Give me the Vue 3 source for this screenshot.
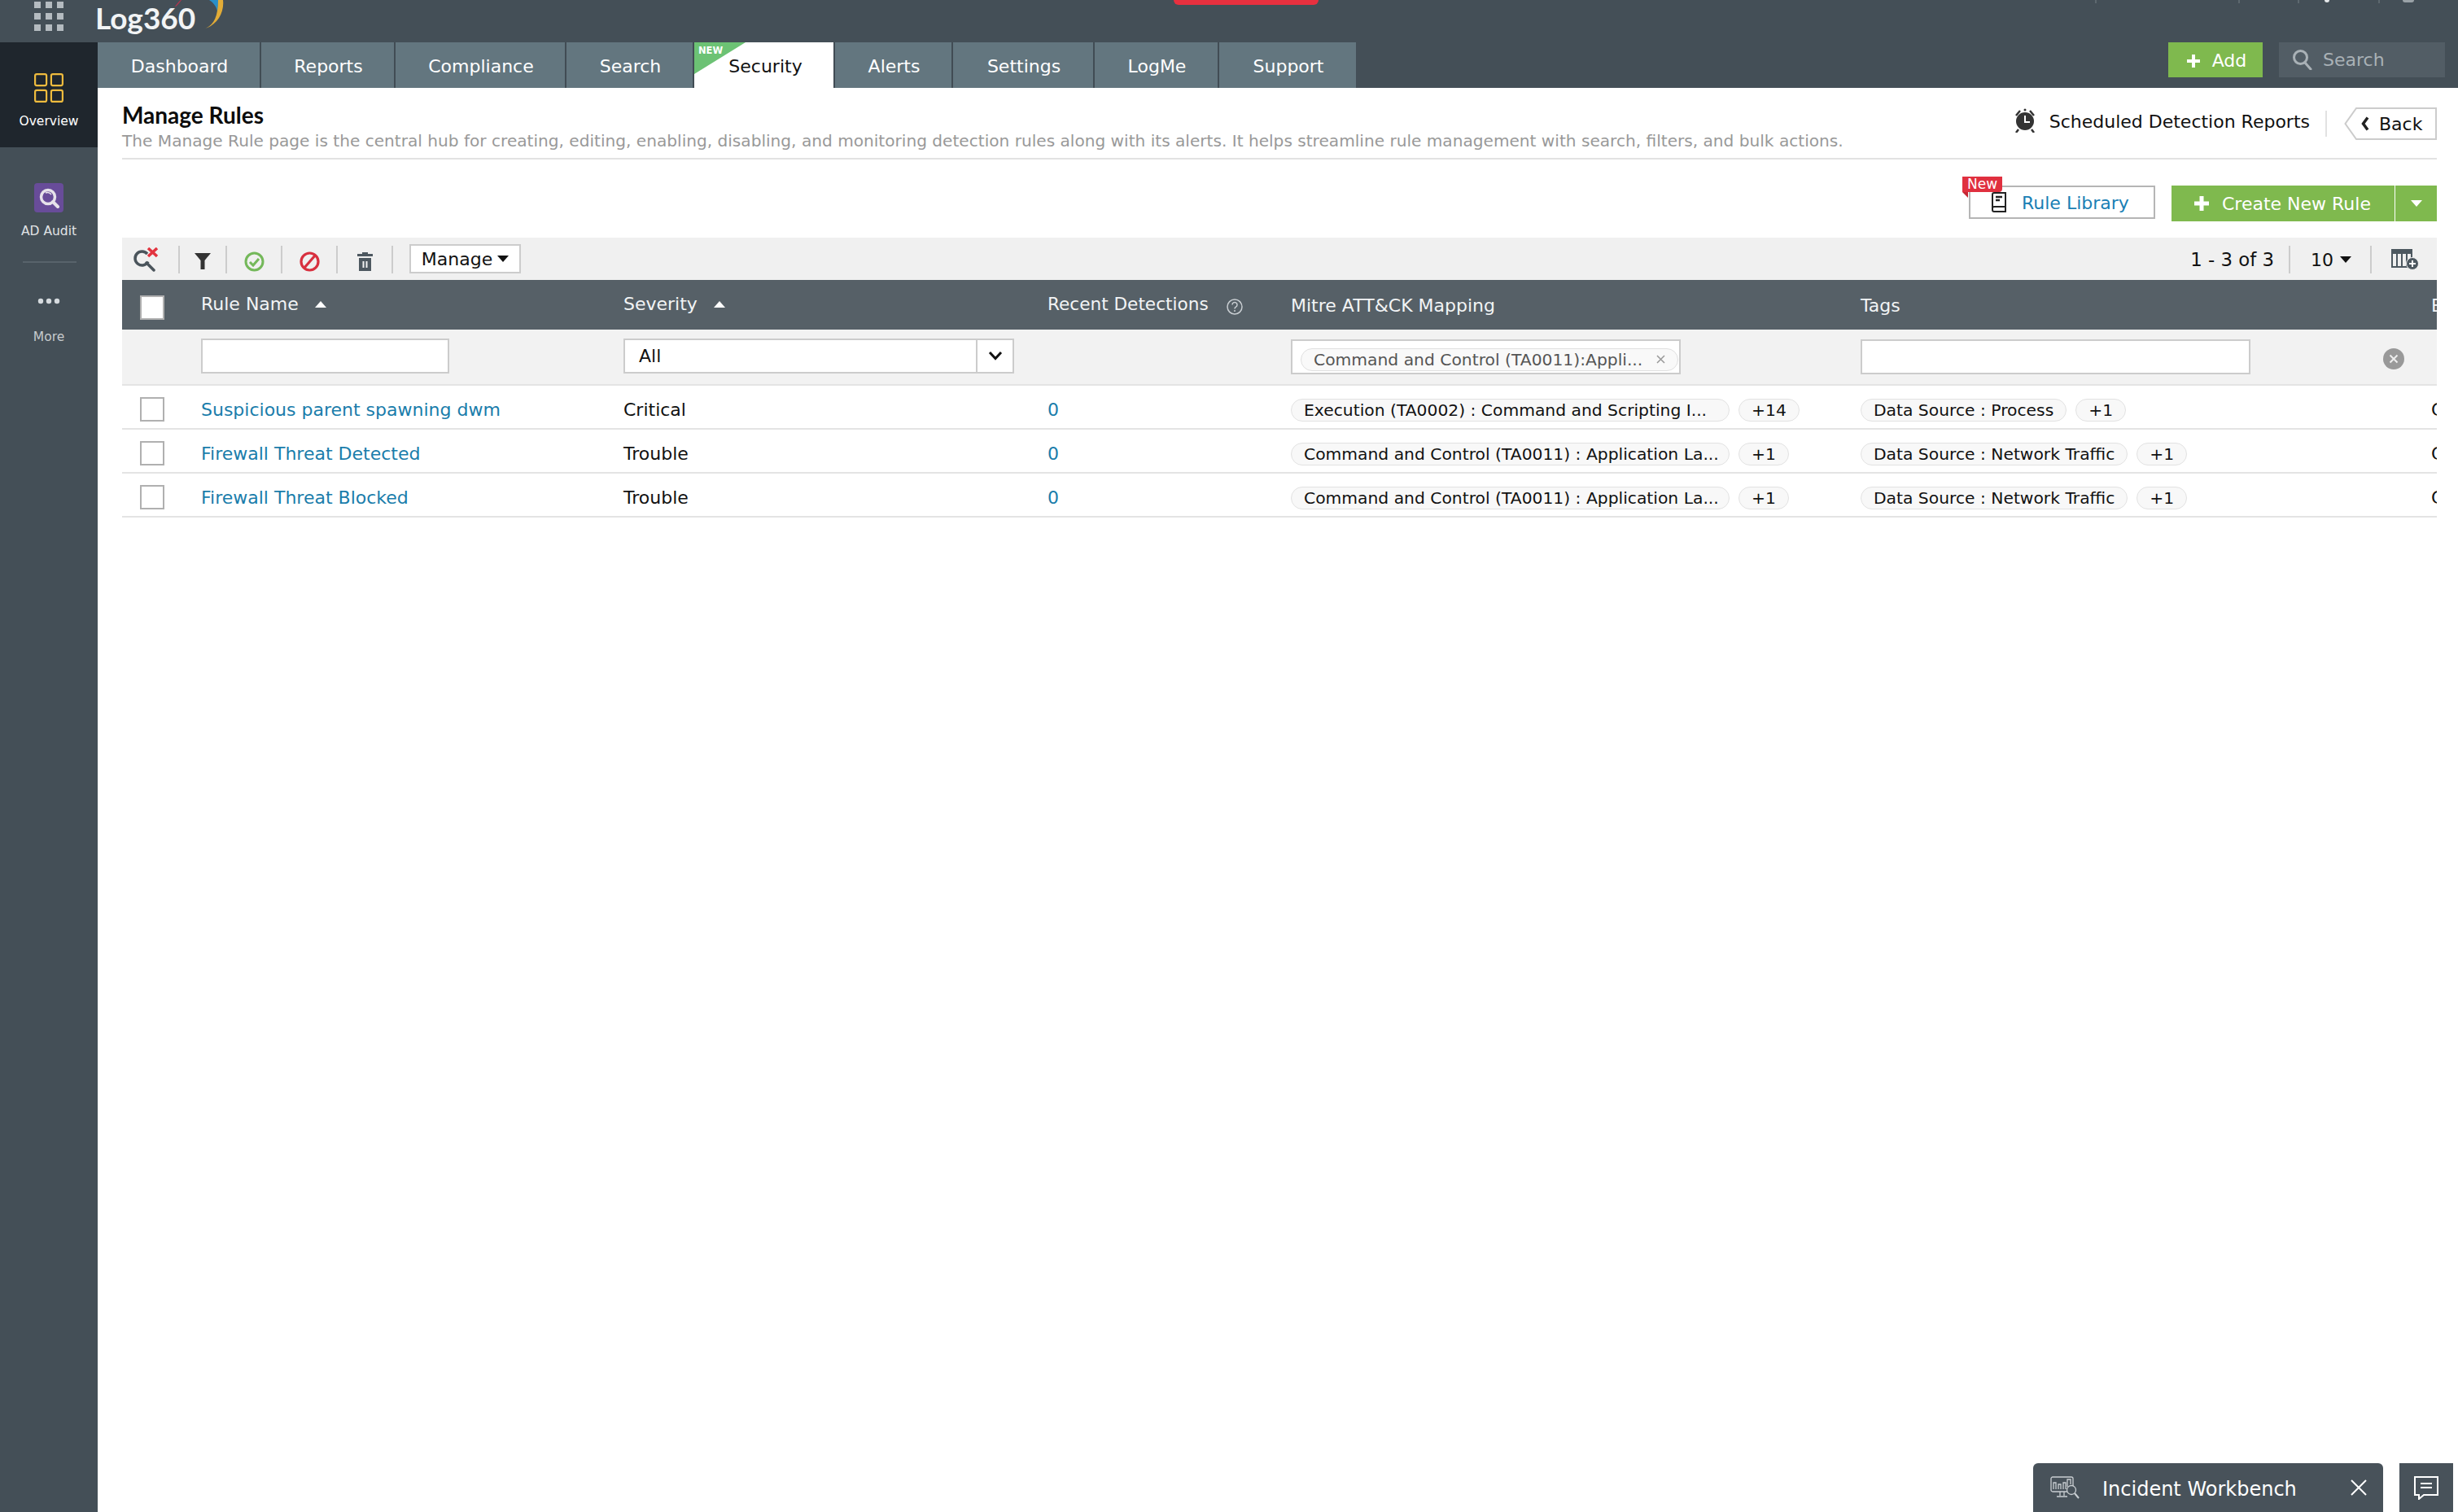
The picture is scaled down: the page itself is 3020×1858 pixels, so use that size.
<script setup>
const tabs = [
  { name: 'Dashboard', w: 201 },
  { name: 'Reports', w: 165 },
  { name: 'Compliance', w: 210 },
  { name: 'Search', w: 157 },
  { name: 'Security', w: 173, active: true },
  { name: 'Alerts', w: 145 },
  { name: 'Settings', w: 174 },
  { name: 'LogMe', w: 153 },
  { name: 'Support', w: 168, last: true },
]
const rows = [
  { name: 'Suspicious parent spawning dwm', sev: 'Critical', mitre: 'Execution (TA0002) : Command and Scripting I...', more: '+14', tag: 'Data Source : Process' },
  { name: 'Firewall Threat Detected', sev: 'Trouble', mitre: 'Command and Control (TA0011) : Application La...', more: '+1', tag: 'Data Source : Network Traffic' },
  { name: 'Firewall Threat Blocked', sev: 'Trouble', mitre: 'Command and Control (TA0011) : Application La...', more: '+1', tag: 'Data Source : Network Traffic' },
]
</script>

<template>
  <div class="app">
    <header class="top">
      <div class="apps">
        <i v-for="n in 9" :key="n"></i>
      </div>
      <div class="logo">
        <span class="logo-text">Log360</span>
        <svg class="swoosh" width="66" height="38" viewBox="0 0 66 38">
          <path d="M3 8 C5 5 7 3 10 0 L11 0 C9 3 7 5 4 8Z" fill="#b8344f" />
          <path d="M45 0 L56 0 C56 5 56 9 55 14 C54 8 50 3 45 0Z" fill="#2a8fc7" />
          <path d="M36 36 C48 34 56 24 56 0 L62 0 C64 16 54 33 36 36Z" fill="#e2ac37" />
        </svg>
      </div>
      <div class="alert-tab"></div>
      <div class="tips">
        <i class="tip t1"></i><i class="tip t2"></i><b class="dot d1"></b><i class="tip t3"></i><i class="tip t4"></i><b class="dot d2"></b>
      </div>
    </header>

    <div class="shell">
      <aside class="side">
        <div class="side-item active">
          <svg width="36" height="36" viewBox="0 0 36 36" fill="none" stroke="#eebb3e" stroke-width="2.2">
            <rect x="1.1" y="1.1" width="14" height="14" rx="2" />
            <rect x="20.9" y="1.1" width="14" height="14" rx="2" />
            <rect x="1.1" y="20.9" width="14" height="14" rx="2" />
            <rect x="20.9" y="20.9" width="14" height="14" rx="2" />
          </svg>
          <span>Overview</span>
        </div>
        <div class="side-item audit">
          <svg width="36" height="36" viewBox="0 0 36 36">
            <rect width="36" height="36" rx="4" fill="#684c99" />
            <circle cx="17" cy="17" r="8.5" fill="#684c99" stroke="#e6e2ea" stroke-width="3.5" />
            <path d="M23 23 L29 29" stroke="#e6e2ea" stroke-width="4" stroke-linecap="round" />
            <path d="M14 12 A6 6 0 0 1 21 14" fill="none" stroke="#e6e2ea" stroke-width="1.5" />
          </svg>
          <span>AD Audit</span>
        </div>
        <div class="side-rule"></div>
        <div class="side-item more">
          <svg width="28" height="8" viewBox="0 0 28 8" fill="#d5dade">
            <circle cx="4" cy="4" r="3.2" /><circle cx="14" cy="4" r="3.2" /><circle cx="24" cy="4" r="3.2" />
          </svg>
          <span>More</span>
        </div>
      </aside>

      <div class="content">
        <nav class="tabs">
          <div
            v-for="t in tabs"
            :key="t.name"
            class="tab"
            :class="{ active: t.active, last: t.last }"
            :style="{ width: t.w + 'px' }"
          >
            <template v-if="t.active">
              <svg class="ribbon" width="63" height="39" viewBox="0 0 63 39"><path d="M0 0H63L0 39Z" fill="#6cc274" /></svg>
              <span class="ribbon-text">NEW</span>
            </template>
            {{ t.name }}
          </div>
          <div class="tab-actions">
            <button class="add-btn">
              <svg width="16" height="16" viewBox="0 0 16 16" fill="#fff"><path d="M6 0h4v6h6v4h-6v6H6v-6H0V6h6z" /></svg>
              <span>Add</span>
            </button>
            <div class="global-search">
              <svg width="26" height="26" viewBox="0 0 26 26" fill="none" stroke="#a9b1b6" stroke-width="3">
                <circle cx="10.5" cy="10.5" r="8" /><path d="M16 17 L23 25" stroke-linecap="round" />
              </svg>
              Search
            </div>
          </div>
        </nav>

        <main class="page">
          <section class="head">
            <div class="head-left">
              <h1>Manage Rules</h1>
              <p>The Manage Rule page is the central hub for creating, editing, enabling, disabling, and monitoring detection rules along with its alerts. It helps streamline rule management with search, filters, and bulk actions.</p>
            </div>
            <div class="head-right">
              <svg width="28" height="30" viewBox="0 0 28 30">
                <circle cx="14" cy="16" r="11" fill="#333" />
                <path d="M14 9v8h6" fill="none" stroke="#fff" stroke-width="2" />
                <path d="M3 9 L8 3 M25 9 L20 3 M6 26 L3 30 M22 26 L25 30" stroke="#333" stroke-width="2.5" />
                <circle cx="14" cy="2" r="1.5" fill="#333" />
              </svg>
              <span class="sched">Scheduled Detection Reports</span>
              <span class="head-sep"></span>
              <div class="back">
                <svg class="back-shape" width="114" height="40" viewBox="0 0 114 40">
                  <path d="M15 1H113V39H15L1.500 20Z" fill="#fff" stroke="#ccc" stroke-width="2" />
                </svg>
                <svg class="back-arrow" width="10" height="18" viewBox="0 0 10 18"><path d="M8 1.500 L2.500 9 L8 16.500" fill="none" stroke="#222" stroke-width="3.500" /></svg>
                <span class="back-text">Back</span>
              </div>
            </div>
          </section>

          <section class="actions">
            <div class="lib">
              <span class="new-flag">New</span>
              <svg width="20" height="25" viewBox="0 0 20 25" fill="none" stroke="#222" stroke-width="2">
                <path d="M2 20V3a2 2 0 0 1 2-2h14v23H4a2 2 0 0 1-2-2v-2a2 2 0 0 1 2-2h14" />
                <path d="M6 6h8M6 10h5" stroke-width="2.500" />
              </svg>
              <span class="lib-text">Rule Library</span>
            </div>
            <div class="create">
              <span class="create-main">
                <svg width="18" height="18" viewBox="0 0 18 18" fill="#fff"><path d="M6.500 0h5v6.500H18v5h-6.500V18h-5v-6.500H0v-5h6.500z" /></svg>
                Create New Rule
              </span>
              <span class="create-drop"><i class="caret white"></i></span>
            </div>
          </section>

          <section class="toolbar">
            <div class="tool first">
              <svg width="32" height="30" viewBox="0 0 32 30" fill="none">
                <path d="M18 8 A8.500 8.500 0 1 0 19 17.500" stroke="#4a545b" stroke-width="3.500" />
                <path d="M17 19 L26 28" stroke="#4a545b" stroke-width="3.500" stroke-linecap="round" />
                <path d="M19 1 L30 11 M30 1 L19 11" stroke="#e2343f" stroke-width="3.500" />
              </svg>
            </div>
            <div class="tool w58">
              <svg class="down" width="20" height="20" viewBox="0 0 20 20" fill="#333"><path d="M0 0H20L12.500 9V20H7.500V9Z" /></svg>
            </div>
            <div class="tool">
              <svg class="down" width="25" height="25" viewBox="0 0 25 25" fill="none">
                <circle cx="12.500" cy="12.500" r="10.500" stroke="#74b85a" stroke-width="3" />
                <path d="M7 13 L11 17 L18 9" stroke="#74b85a" stroke-width="3" />
              </svg>
            </div>
            <div class="tool">
              <svg class="down" width="25" height="25" viewBox="0 0 25 25" fill="none">
                <circle cx="12.500" cy="12.500" r="10.500" stroke="#d8303f" stroke-width="3.200" />
                <path d="M19 5 L6 20" stroke="#d8303f" stroke-width="3.200" />
              </svg>
            </div>
            <div class="tool">
              <svg class="down" width="19" height="23" viewBox="0 0 19 23">
                <path d="M6 0h7v2h6v3H0V2h6z M2 7h15v16H2z" fill="#4d5860" />
                <path d="M7.500 11v8M11.500 11v8" stroke="#f0f0f0" stroke-width="2" />
              </svg>
            </div>
            <div class="manage">Manage <i class="caret"></i></div>
            <div class="pager">
              <span class="pg-count">1 - 3 of 3</span>
              <span class="pg-size">10 <i class="caret"></i></span>
              <span class="pg-cols">
                <svg width="34" height="26" viewBox="0 0 34 26">
                  <path d="M0 0H26V6H0Z" fill="#4d5860" />
                  <path d="M1 6V22H25V6M7 6V22M13 6V22M19 6V22" fill="none" stroke="#4d5860" stroke-width="2" />
                  <circle cx="26" cy="18" r="7.500" fill="#4d5860" stroke="#f0f0f0" stroke-width="1" />
                  <path d="M26 14V22M22 18H30" stroke="#fff" stroke-width="2" />
                </svg>
              </span>
            </div>
          </section>

          <section class="table">
            <div class="grid thead">
              <div class="cell"><span class="check head-check"></span></div>
              <div class="cell up">Rule Name <i class="sort"></i></div>
              <div class="cell up">Severity <i class="sort s2"></i></div>
              <div class="cell up">
                <span class="recent">Recent Detections</span>
                <svg class="help" width="20" height="20" viewBox="0 0 20 20" fill="none" stroke="#c9ced2" stroke-width="1.500">
                  <circle cx="10" cy="10" r="9" />
                  <path d="M7 7.500a3 3 0 1 1 4.500 2.600c-1 .6-1.500 1-1.500 2.400" />
                  <path d="M10 14v2" />
                </svg>
              </div>
              <div class="cell">Mitre ATT&amp;CK Mapping</div>
              <div class="cell">Tags</div>
              <div class="cell">E</div>
            </div>

            <div class="grid tfilter">
              <div class="cell"></div>
              <div class="cell"><div class="field f-name"></div></div>
              <div class="cell">
                <div class="field f-sev">
                  <span class="f-sev-text">All</span>
                  <span class="f-sev-btn">
                    <svg width="18" height="12" viewBox="0 0 18 12" fill="none"><path d="M2 2 L9 9.500 L16 2" stroke="#111" stroke-width="3" /></svg>
                  </span>
                </div>
              </div>
              <div class="cell"></div>
              <div class="cell">
                <div class="field f-mitre">
                  <span class="chip">
                    <span>Command and Control (TA0011):Appli...</span>
                    <svg width="11" height="11" viewBox="0 0 11 11"><path d="M1 1 L10 10 M10 1 L1 10" stroke="#999" stroke-width="1.500" /></svg>
                  </span>
                </div>
              </div>
              <div class="cell"><div class="field f-tags"></div></div>
              <div class="cell"></div>
              <svg class="clear-all" width="26" height="26" viewBox="0 0 26 26">
                <circle cx="13" cy="13" r="13" fill="#999" />
                <path d="M8.500 8.500 L17.500 17.500 M17.500 8.500 L8.500 17.500" stroke="#eee" stroke-width="2" />
              </svg>
            </div>

            <div v-for="r in rows" :key="r.name" class="grid trow">
              <div class="cell"><span class="check"></span></div>
              <div class="cell link">{{ r.name }}</div>
              <div class="cell">{{ r.sev }}</div>
              <div class="cell link">0</div>
              <div class="cell pills">
                <span class="pill p-mitre">{{ r.mitre }}</span>
                <span class="pill p-more">{{ r.more }}</span>
              </div>
              <div class="cell pills">
                <span class="pill">{{ r.tag }}</span>
                <span class="pill p-more">+1</span>
              </div>
              <div class="cell">C</div>
            </div>
          </section>
        </main>
      </div>
    </div>

    <div class="dock">
      <div class="workbench">
        <svg width="36" height="28" viewBox="0 0 36 28" fill="none" stroke="#c9ced2" stroke-width="1.300">
          <rect x="1" y="1" width="27" height="18" rx="2" />
          <path d="M4 16V8h3v8M10 16v-6h3v6M16 16V8h3v8M21 13V4h4v6M12 19v5M17 19v5M8 25h13" />
          <circle cx="26" cy="17" r="5.500" fill="#48525a" />
          <path d="M30 21 L35 27" stroke-width="2" />
        </svg>
        <span class="wb-text">Incident Workbench</span>
        <svg class="wb-close" width="20" height="20" viewBox="0 0 20 20"><path d="M1 1 L19 19 M19 1 L1 19" stroke="#fff" stroke-width="2" /></svg>
      </div>
      <div class="chat">
        <svg width="30" height="29" viewBox="0 0 30 29" fill="none" stroke="#fff" stroke-width="2">
          <path d="M1 1H29V23H12L6 28V23H1Z" />
          <path d="M8 9H22M8 14H22" />
        </svg>
      </div>
    </div>
  </div>
</template>

<style>
html, body { margin: 0; padding: 0; background: #fff; }
</style>

<style scoped>
.app {
  width: 3020px;
  height: 1858px;
  overflow: hidden;
  position: relative;
  background: #fff;
  font-family: "DejaVu Sans", sans-serif;
  font-size: 22px;
  color: #111;
}
.top {
  height: 52px;
  background: #444f57;
  display: flex;
  align-items: flex-start;
  position: relative;
}
.apps {
  width: 36px;
  margin: 2px 0 0 42px;
  display: grid;
  grid-template-columns: repeat(3, 8px);
  grid-auto-rows: 8px;
  gap: 6px;
}
.apps i { background: #b4bbc0; }
.logo { display: flex; align-items: flex-start; margin-left: 39px; position: relative; }
.logo-text {
  font-family: Lato, sans-serif;
  font-weight: 700;
  font-size: 37px;
  line-height: 44px;
  margin-top: 0;
  color: #f2f4f5;
}
.swoosh { position: absolute; left: 95px; top: 0; }
.alert-tab {
  position: absolute;
  left: 1442px;
  top: 0;
  width: 178px;
  height: 6px;
  background: #e8303f;
  border-radius: 0 0 6px 6px;
}
.tips { position: absolute; inset: 0; }
.tip { position: absolute; top: 0; width: 2px; height: 4px; background: #5d686f; }
.t1 { left: 2574px; } .t2 { left: 2750px; } .t3 { left: 2823px; } .t4 { left: 2922px; }
.dot { position: absolute; top: 0; height: 3px; border-radius: 0 0 4px 4px; background: #e5e8ea; }
.d1 { left: 2856px; width: 6px; }
.d2 { left: 2952px; width: 14px; background: #9aa2a7; }

.shell { display: flex; height: 1806px; }
.side { width: 120px; flex: none; background: #444f57; display: flex; flex-direction: column; }
.side-item {
  display: flex;
  flex-direction: column;
  align-items: center;
  font-size: 15.500px;
  color: #e0e3e5;
}
.side-item.active { height: 129px; background: #1f262d; padding-top: 38px; box-sizing: border-box; color: #fff; gap: 14px; }
.side-item.audit { margin-top: 44px; gap: 14px; }
.side-rule { height: 2px; width: 66px; margin: 28px 0 0 28px; background: #58636b; }
.side-item.more { margin-top: 43px; gap: 31px; color: #c6cacd; }

.content { flex: 1; min-width: 0; display: flex; flex-direction: column; }
.tabs { height: 56px; flex: none; background: #444f57; display: flex; }
.tab {
  box-sizing: border-box;
  position: relative;
  background: #63767f;
  color: #fff;
  border-right: 2px solid #414c54;
  display: flex;
  align-items: center;
  justify-content: center;
  padding: 2px 0 0 2px;
}
.tab.last { border-right: 0; }
.tab.active { background: #fff; color: #111; border-right: 2px solid #414c54; padding-left: 4px; }
.ribbon { position: absolute; left: 0; top: 0; }
.ribbon-text {
  position: absolute;
  left: 5px;
  top: 4px;
  font-size: 11.500px;
  line-height: 12px;
  font-weight: 700;
  color: #fff;
}
.tab-actions {
  margin-left: auto;
  display: flex;
  gap: 20px;
  padding: 0 16px 13px 0;
}
.add-btn {
  width: 116px;
  height: 44px;
  margin-top: -1px;
  border: 0;
  padding: 3px 0 0;
  background: #7fb94e;
  color: #fff;
  font: inherit;
  display: flex;
  align-items: center;
  justify-content: center;
  gap: 15px;
}
.add-btn span { margin-right: -3px; }
.global-search {
  width: 204px;
  height: 44px;
  margin-top: -1px;
  box-sizing: border-box;
  padding-left: 16px;
  background: #525d65;
  color: #a9b1b6;
  display: flex;
  align-items: center;
  gap: 12px;
}

.page { flex: 1; padding: 0 26px 0 30px; display: flex; flex-direction: column; min-width: 0; }
.head {
  height: 88px;
  flex: none;
  box-sizing: border-box;
  border-bottom: 2px solid #e2e2e2;
  display: flex;
  justify-content: space-between;
}
.head h1 {
  margin: 17px 0 0;
  font-family: Lato, sans-serif;
  font-size: 28px;
  line-height: 32px;
  font-weight: 700;
  color: #0c0c0c;
}
.head p {
  margin: 3px 0 0;
  font-size: 20.120px;
  line-height: 26px;
  color: #999;
  white-space: nowrap;
}
.head-left { min-width: 0; }
.head-right { display: flex; align-items: flex-start; padding-top: 24px; }
.head-right > svg { margin-top: 1px; }
.sched { margin: 3px 0 0 16px; line-height: 30px; }
.head-sep { width: 2px; height: 32px; margin: 4px 21px 0 19px; background: #e2e2e2; }
.back { position: relative; width: 114px; height: 40px; display: flex; align-items: center; }
.back-shape { position: absolute; left: 0; top: 0; }
.back-arrow { position: relative; margin-left: 21px; }
.back-text { position: relative; margin-left: 12px; }

.actions {
  height: 96px;
  flex: none;
  display: flex;
  justify-content: flex-end;
  align-items: flex-start;
  gap: 20px;
  padding-top: 32px;
  box-sizing: border-box;
}
.lib {
  width: 229px;
  height: 41px;
  box-sizing: border-box;
  border: 2px solid #b5b5b5;
  position: relative;
  display: flex;
  align-items: center;
  gap: 18px;
  padding-left: 25px;
  color: #1a7fb5;
}
.lib-text { margin-top: 2px; }
.new-flag {
  position: absolute;
  left: -10px;
  top: -13px;
  width: 49px;
  height: 19px;
  background: #e0303f;
  color: #fff;
  font-size: 17px;
  line-height: 19px;
  text-align: center;
  border-radius: 0 0 4px 0;
}
.new-flag::after {
  content: "";
  position: absolute;
  left: 0;
  top: 19px;
  border-top: 7px solid #c52634;
  border-left: 7px solid transparent;
}
.create { display: flex; height: 44px; color: #fff; }
.create-main {
  width: 274px;
  box-sizing: border-box;
  background: #7fb94e;
  display: flex;
  align-items: center;
  gap: 16px;
  padding-left: 28px;
}
.create-drop {
  width: 51px;
  margin-left: 1px;
  background: #7fb94e;
  display: flex;
  align-items: center;
  justify-content: center;
}

.toolbar {
  height: 52px;
  flex: none;
  background: #f0f0f0;
  display: flex;
  align-items: center;
}
.tool {
  width: 68px;
  height: 34px;
  box-sizing: border-box;
  border-right: 2px solid #ccc;
  display: flex;
  align-items: center;
  justify-content: center;
  margin-top: 2px;
}
.tool.first { width: 71px; justify-content: flex-start; padding-left: 13px; }
.tool.w58 { width: 58px; }
.down { margin-top: 4px; }
.manage {
  margin: 0 0 0 20px;
  width: 137px;
  height: 36px;
  box-sizing: border-box;
  border: 2px solid #ccc;
  background: #fff;
  display: flex;
  align-items: center;
  justify-content: center;
  gap: 6px;
}
.caret {
  display: inline-block;
  width: 0;
  height: 0;
  border-left: 7.500px solid transparent;
  border-right: 7.500px solid transparent;
  border-top: 8px solid #111;
}
.caret.white { border-top-color: #fff; }
.pager { margin-left: auto; display: flex; align-items: center; height: 34px; margin-top: 2px; }
.pg-count { height: 34px; display: flex; align-items: center; padding-right: 18px; border-right: 2px solid #ccc; font-size: 22.800px; }
.pg-size { width: 100px; height: 34px; box-sizing: border-box; padding-left: 25px; border-right: 2px solid #ccc; display: flex; align-items: center; gap: 8px; }
.pg-cols { width: 80px; box-sizing: border-box; padding-left: 24px; display: flex; }

.table { overflow: hidden; }
.grid {
  display: grid;
  grid-template-columns: 97px 519px 521px 299px 700px 701px 200px;
  width: 3037px;
  box-sizing: border-box;
  position: relative;
}
.cell { display: flex; align-items: center; min-width: 0; white-space: nowrap; }
.check {
  width: 30px;
  height: 30px;
  box-sizing: border-box;
  margin-left: 22px;
  border: 2px solid #b0b0b0;
  background: #fff;
  display: block;
}
.thead { height: 61px; padding-top: 2px; background: #566067; color: #f2f4f5; }
.head-check { margin-top: 4px; }
.up { padding-bottom: 4px; }
.recent { font-size: 21.600px; }
.sort {
  margin-left: 20px;
  width: 0;
  height: 0;
  border-left: 7.500px solid transparent;
  border-right: 7.500px solid transparent;
  border-bottom: 8px solid #fff;
}
.help { margin-left: 22px; margin-top: 6px; }
.tfilter { height: 69px; background: #f2f2f2; border-bottom: 2px solid #e4e4e4; }
.field { box-sizing: border-box; height: 43px; border: 2px solid #ccc; background: #fff; display: flex; align-items: center; }
.f-name { width: 305px; margin-top: -3px; }
.f-sev { width: 480px; margin-top: -3px; }
.f-sev-text { flex: 1; padding-left: 17px; }
.f-sev-btn { width: 43px; height: 100%; border-left: 2px solid #ccc; display: flex; align-items: center; justify-content: center; }
.f-mitre { width: 479px; margin-top: 0; padding-left: 10px; }
.f-tags { width: 479px; margin-top: 0; }
.chip {
  width: 464px;
  height: 28px;
  box-sizing: border-box;
  margin-top: 6px;
  border: 1.500px solid #e0e0e0;
  border-radius: 14px;
  padding: 0 15px;
  display: flex;
  align-items: center;
  justify-content: space-between;
  font-size: 20.300px;
  color: #555;
  background: #f9f9f9;
}
.clear-all { position: absolute; left: 2778px; top: 23px; }
.trow { height: 54px; padding-top: 6px; border-bottom: 2px solid #e4e4e4; }
.link { color: #1a7dab; }
.pills { gap: 11px; padding-top: 2px; }
.pill {
  box-sizing: border-box;
  height: 28px;
  border: 1.500px solid #e2e2e2;
  border-radius: 14px;
  background: #f8f8f8;
  padding: 0 15px;
  display: flex;
  align-items: center;
  font-size: 20.300px;
  color: #111;
}
.p-mitre { width: 539px; }
.p-more { padding: 0 15px; }

.dock { position: absolute; right: 6px; bottom: 0; display: flex; gap: 20px; }
.workbench {
  width: 430px;
  height: 60px;
  box-sizing: border-box;
  padding: 0 20px 0 21px;
  background: #48525a;
  border-radius: 6px 6px 0 0;
  color: #fff;
  display: flex;
  align-items: center;
}
.wb-text { font-size: 24px; margin-left: 28px; padding-top: 3px; }
.wb-close { margin-left: auto; }
.chat { width: 66px; height: 60px; background: #48525a; display: flex; align-items: center; justify-content: center; }
</style>
